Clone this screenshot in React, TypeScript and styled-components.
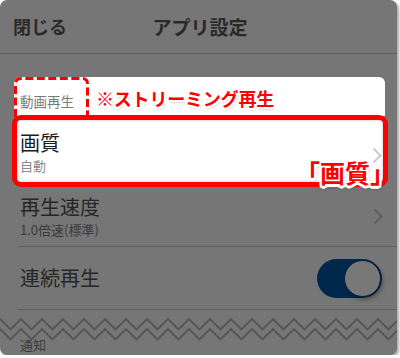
import React from "react";
import styled, { createGlobalStyle } from "styled-components";

const Global = createGlobalStyle`
  html, body { margin: 0; padding: 0; background: #ffffff; }
  body { font-family: "Noto Sans CJK JP", "Noto Sans", sans-serif; }
  * { box-sizing: border-box; }
`;

const Frame = styled.div`
  width: 397px;
  height: 355px;
  border-radius: 7px;
  overflow: hidden;
  background: #767676;
  box-shadow: 2px 2px 3px rgba(0, 0, 0, 0.35);
  display: flex;
  flex-direction: column;
`;

const Header = styled.header`
  height: 54px;
  flex: none;
  border-bottom: 1px solid #5c5c5c;
  display: grid;
  grid-template-columns: 1fr auto 1fr;
  align-items: center;
  padding: 0 13px 1px;
  color: #2a2a2a;
`;

const CloseButton = styled.span`
  justify-self: start;
  font-size: 18px;
  font-weight: 700;
`;

const Title = styled.h1`
  margin: 0 0 0 3px;
  font-size: 19px;
  font-weight: 700;
`;

const Content = styled.div`
  padding-top: 23px;
  display: flex;
  flex-direction: column;
`;

const SectionHeader = styled.div`
  margin: 0 12px 0 14px;
  height: 39px;
  background: #ffffff;
  border-radius: 6px 6px 0 0;
  display: flex;
  align-items: stretch;
  gap: 7px;
`;

const DashedLabel = styled.div`
  position: relative;
  width: 75px;
  display: flex;
  align-items: flex-end;
  padding: 0 0 7px 6px;
  font-size: 13.5px;
  line-height: 16px;
  color: #7a7a7a;
`;

const DashFrame = styled.svg`
  position: absolute;
  left: 0;
  top: 0;
  overflow: visible;
`;

const Annotation = styled.span`
  align-self: center;
  margin-top: 2px;
  font-size: 18px;
  font-weight: 700;
  color: #ff0000;
  letter-spacing: -0.2px;
  text-shadow: -2px 0 0 #fff, 2px 0 0 #fff, 0 -2px 0 #fff, 0 2px 0 #fff,
    -1.5px -1.5px 0 #fff, 1.5px -1.5px 0 #fff, -1.5px 1.5px 0 #fff,
    1.5px 1.5px 0 #fff, 1px 2px 3px rgba(0, 0, 0, 0.35);
`;

const HighlightRow = styled.div`
  position: relative;
  margin: -1px 9px 0 12px;
  height: 72px;
  border: 5px solid #ff0000;
  border-radius: 9px;
  background: #ffffff;
  box-shadow: inset 0 0 3px rgba(0, 0, 0, 0.25);
  display: flex;
  align-items: flex-start;
  justify-content: space-between;
  padding: 11px 1px 0 3px;
`;

const Row = styled.div<{ $height: number }>`
  margin-left: 18px;
  height: ${(p) => p.$height}px;
  flex: none;
  border-bottom: 1px solid #5f5f5f;
  display: flex;
  align-items: center;
  justify-content: space-between;
  padding: 0 14px 0 2px;
`;

const TextBlock = styled.div`
  display: flex;
  flex-direction: column;
`;

const ItemTitle = styled.span<{ $dim?: boolean }>`
  font-size: 20px;
  line-height: 24px;
  color: ${(p) => (p.$dim ? "#262626" : "#1c1c1c")};
`;

const ItemSub = styled.span<{ $dim?: boolean }>`
  margin-top: 2px;
  font-size: 13px;
  line-height: 17px;
  color: ${(p) => (p.$dim ? "#3a3a3a" : "#8a8a8a")};
`;

const Chevron = styled.svg<{ $offset?: number }>`
  flex: none;
  margin-top: ${(p) => p.$offset ?? 0}px;
`;

const Badge = styled.span`
  position: absolute;
  left: 278px;
  top: 37px;
  font-size: 25px;
  line-height: 30px;
  font-weight: 700;
  color: #ff0000;
  white-space: nowrap;
  text-shadow: -2.5px 0 0 #fff, 2.5px 0 0 #fff, 0 -2.5px 0 #fff, 0 2.5px 0 #fff,
    -2px -2px 0 #fff, 2px -2px 0 #fff, -2px 2px 0 #fff,
    2px 2px 0 #fff, 1px 2px 4px rgba(0, 0, 0, 0.45);
`;

const Toggle = styled.div`
  width: 65px;
  height: 39px;
  border-radius: 20px;
  background: #00284c;
  display: flex;
  align-items: center;
  justify-content: flex-end;
  padding-right: 1px;
  margin-right: 1px;
`;

const Knob = styled.div`
  width: 37px;
  height: 37px;
  border-radius: 50%;
  background: #787878;
  border: 1px solid #00203d;
  box-shadow: 2px 3px 4px rgba(0, 0, 0, 0.3);
`;

const Cut = styled.svg`
  display: block;
  flex: none;
`;

const SectionLabel = styled.div`
  padding-left: 20px;
  margin-top: -4px;
  font-size: 13px;
  line-height: 15px;
  color: #3c3c3c;
`;

const zig = (y: number) => {
  const pts: string[] = [];
  for (let i = 0; i <= 40; i++) {
    const x = i * 10.5;
    pts.push(`${x},${i % 2 === 0 ? y : y + 10.5}`);
  }
  return pts.join(" ");
};

const ChevronIcon = ({ color, offset }: { color: string; offset?: number }) => (
  <Chevron $offset={offset} width="10" height="17" viewBox="0 0 10 17">
    <path d="M1.5 1.5 L8.5 8.5 L1.5 15.5" fill="none" stroke={color} strokeWidth="1.8" />
  </Chevron>
);

export default function App() {
  return (
    <>
      <Global />
      <Frame>
        <Header>
          <CloseButton>閉じる</CloseButton>
          <Title>アプリ設定</Title>
          <span />
        </Header>
        <Content>
          <SectionHeader>
            <DashedLabel>
              <DashFrame width="75" height="40" viewBox="0 0 75 40">
                <path
                  d="M1.5 40 L1.5 7 Q1.5 1.5 7 1.5 L68 1.5 Q73.5 1.5 73.5 7 L73.5 40"
                  fill="none"
                  stroke="#ff0000"
                  strokeWidth="3"
                  strokeDasharray="8 3.5"
                />
              </DashFrame>
              動画再生
            </DashedLabel>
            <Annotation>※ストリーミング再生</Annotation>
          </SectionHeader>
          <HighlightRow>
            <TextBlock>
              <ItemTitle>画質</ItemTitle>
              <ItemSub>自動</ItemSub>
            </TextBlock>
            <ChevronIcon color="#c8c8cc" offset={16} />
            <Badge>「画質」</Badge>
          </HighlightRow>
          <Row $height={60}>
            <TextBlock>
              <ItemTitle $dim>再生速度</ItemTitle>
              <ItemSub $dim>1.0倍速(標準)</ItemSub>
            </TextBlock>
            <ChevronIcon color="#5e5e5e" />
          </Row>
          <Row $height={63}>
            <ItemTitle $dim>連続再生</ItemTitle>
            <Toggle>
              <Knob />
            </Toggle>
          </Row>
          <Cut width="397" height="31" viewBox="0 0 397 31">
            <polyline points={zig(9)} fill="none" stroke="#555555" strokeWidth="1.8" />
            <polyline points={zig(19)} fill="none" stroke="#555555" strokeWidth="1.8" />
          </Cut>
          <SectionLabel>通知</SectionLabel>
        </Content>
      </Frame>
    </>
  );
}
